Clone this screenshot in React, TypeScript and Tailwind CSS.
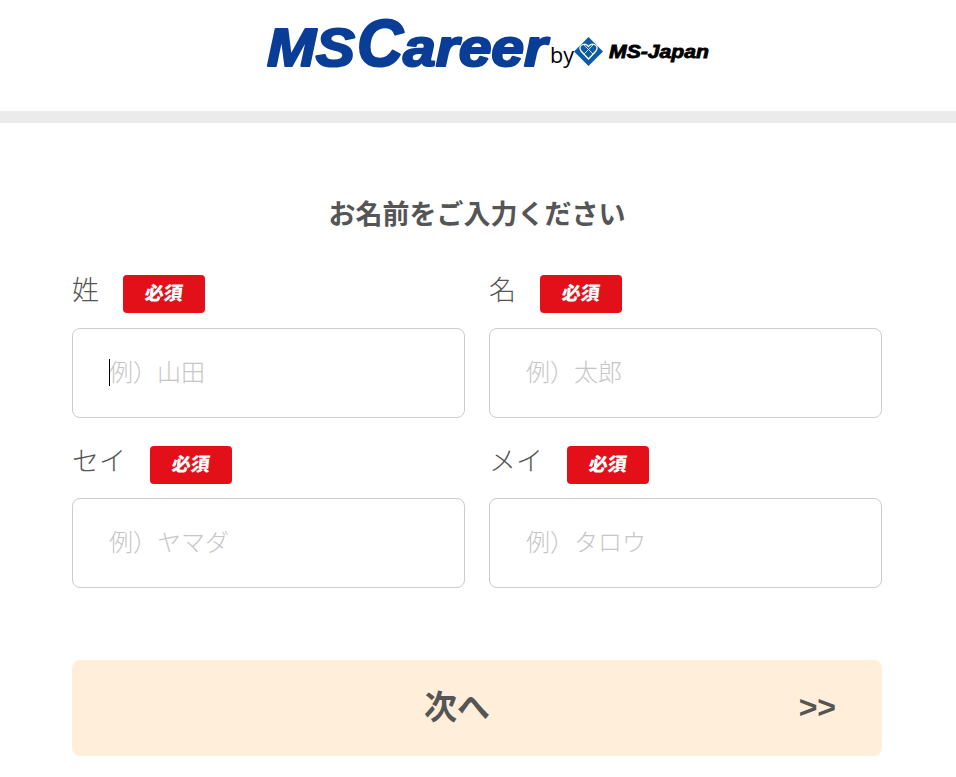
import React from 'react';

const cjk = 'font-["Noto_Sans_CJK_JP","Liberation_Sans",sans-serif]';

function Logo() {
  return (
    <svg width="450" height="76" viewBox="0 -16 450 76" className="block overflow-visible">
      <g fill="#0a3d96" stroke="#0a3d96" strokeWidth="2.2" strokeLinejoin="round" fontFamily="Liberation Sans" fontWeight="700" fontStyle="italic">
        <text x="1" y="50" fontSize="54" textLength="88" lengthAdjust="spacingAndGlyphs">MS</text>
        <text x="91" y="50" fontSize="66" textLength="46" lengthAdjust="spacingAndGlyphs">C</text>
        <text x="137" y="50" fontSize="54" textLength="144" lengthAdjust="spacingAndGlyphs">areer</text>
      </g>
      <text x="284" y="47" fontSize="21" fontFamily="Open Sans" fill="#000" textLength="24" lengthAdjust="spacingAndGlyphs">by</text>
      {/* ms-japan mark */}
      <path d="M322.5 21 L337 35.5 L322.5 50 L308 35.5 Z" fill="#0c5ba8" />
      <path d="M322.5 43 L315 35 Q312 30 317 28.5 Q320.5 27.5 322.5 30.5 Q324.5 27.5 328 28.5 Q333 30 330 35 Z" fill="none" stroke="#fff" strokeWidth="1.3" />
      <path d="M318 29 L327 38 M327 29 L318 38" fill="none" stroke="#fff" strokeWidth="0.8" />
      <text x="343" y="42" fontSize="18" fontFamily="Liberation Sans" fontWeight="700" fontStyle="italic" stroke="#000" strokeWidth="0.8" fill="#000" textLength="100" lengthAdjust="spacingAndGlyphs">MS-Japan</text>
    </svg>
  );
}

function Field({ label, placeholder, caret, gap }: { label: string; placeholder: string; caret?: boolean; gap: string }) {
  return (
    <div>
      <div className="flex items-start h-[38px]">
        <span className="text-[27px] leading-[28px] font-light text-[#555] mr-6">{label}</span>
        <span className="w-[82px] h-[38px] rounded bg-[#e3101a] text-white flex items-center justify-center pb-1">
          <span className="text-[19px] font-black -skew-x-6">必須</span>
        </span>
      </div>
      <div className={`relative ${gap}`}>
        <input
          readOnly
          placeholder={placeholder}
          className="w-full h-[90px] rounded-lg border border-[#ccc] bg-white pl-[36px] pr-9 pb-1.5 text-[24px] font-light outline-none placeholder:text-[#c6c6c6]"
        />
        {caret && <span className="absolute left-[37px] top-[31px] w-px h-[27px] bg-black" />}
      </div>
    </div>
  );
}

export default function App() {
  return (
    <div className={`w-[956px] h-[777px] overflow-hidden bg-white text-[#555] ${cjk}`}>
      <header className="h-[111px] flex justify-center">
        <div className="ml-[26px]">
          <Logo />
        </div>
      </header>
      <div className="h-3 bg-[#ebebeb]" />
      <main className="pl-[72px] pr-[74px]">
        <h1 className="mt-[71px] h-[38px] text-center text-[27px] leading-[38px] font-bold">お名前をご入力ください</h1>
        <div className="mt-[43px] grid grid-cols-2 gap-x-6 gap-y-7">
          <Field label="姓" placeholder="例）山田" gap="mt-[15px]" caret />
          <Field label="名" placeholder="例）太郎" gap="mt-[15px]" />
          <Field label="セイ" placeholder="例）ヤマダ" gap="mt-[14px]" />
          <Field label="メイ" placeholder="例）タロウ" gap="mt-[14px]" />
        </div>
        <button className="relative mt-[72px] w-full h-[96px] rounded-lg bg-[#ffeed9] text-[33px] font-bold text-[#555]">
          <span className="block pr-10 -translate-y-0.5">次へ</span>
          <span className="absolute right-[46px] top-[49%] -translate-y-1/2 text-[32px] font-['Liberation_Sans'] font-bold">&gt;&gt;</span>
        </button>
      </main>
    </div>
  );
}
